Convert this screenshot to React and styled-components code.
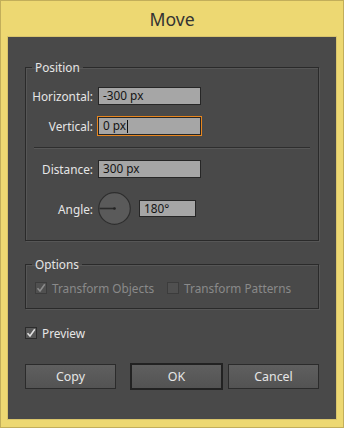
import React from 'react';
import styled, { createGlobalStyle } from 'styled-components';

const GlobalStyle = createGlobalStyle`
    html, body {
        margin: 0;
        padding: 0;
        background: #edd872;
    }
    * {
        box-sizing: border-box;
    }
`;

const font = `"Noto Sans", "Open Sans", sans-serif`;

const Frame = styled.div`
    width: 344px;
    height: 428px;
    display: flex;
    flex-direction: column;
    background: #edd872;
    border: 1px solid #c2ae5a;
    font-family: ${font};
    font-size: 11.8px;
`;

const TitleBar = styled.div`
    height: 36px;
    display: flex;
    align-items: center;
    justify-content: center;
    color: #333;
    font-size: 17.6px;
    padding-bottom: 1px;
`;

const Panel = styled.div`
    flex: 1;
    margin: 0 7px 8px;
    background: #494949;
    box-shadow: 0 0 0 1px #d8c46c;
    padding: 22px 17px 0;
    display: flex;
    flex-direction: column;
`;

const Group = styled.fieldset`
    margin: ${(p) => p.$top || 0}px 0 0;
    padding: 0 0 ${(p) => p.$bottom || 0}px;
    border: 1px solid #2a2a2a;
    box-shadow: inset 1px 1px 0 #565656, 1px 1px 0 #565656;
    min-width: 0;
`;

const Legend = styled.legend`
    margin-left: 6px;
    padding: 0 3px;
    color: #e6e6e6;
    line-height: 16px;
`;

const Row = styled.div`
    display: flex;
    align-items: center;
    margin-top: ${(p) => p.$top}px;
    height: ${(p) => p.$height || 18}px;
`;

const Label = styled.div`
    width: 67px;
    text-align: right;
    color: #e6e6e6;
    margin-right: 5px;
    white-space: nowrap;
`;

const Field = styled.div`
    width: ${(p) => p.$width || 103}px;
    height: ${(p) => p.$height || 18}px;
    background: #a6a6a6;
    border: 1px solid #262626;
    color: #141414;
    padding-left: 4px;
    display: flex;
    align-items: center;
    line-height: 1;
    outline: ${(p) => (p.$focus ? '1px solid #e8861e' : 'none')};
    margin-left: ${(p) => p.$gap || 0}px;
`;

const Caret = styled.span`
    display: inline-block;
    width: 1px;
    height: 13px;
    background: #111;
    margin-left: 1px;
`;

const Separator = styled.div`
    margin: 12px 8px 0;
    border-top: 1px solid #2e2e2e;
    border-bottom: 1px solid #575757;
`;

const CheckRow = styled.div`
    display: flex;
    align-items: center;
    height: 12px;
    margin-top: ${(p) => p.$top}px;
    padding-left: ${(p) => p.$left || 0}px;
`;

const Check = styled.label`
    display: flex;
    align-items: center;
    gap: 5px;
    margin-right: 13px;
    color: ${(p) => (p.$disabled ? '#8a8a8a' : '#e6e6e6')};
    white-space: nowrap;
`;

const Box = styled.span`
    width: 12px;
    height: 12px;
    border: 1px solid ${(p) => (p.$disabled ? '#3c3c3c' : '#2c2c2c')};
    background: ${(p) => (p.$disabled ? '#505050' : '#575757')};
    display: flex;
    align-items: center;
    justify-content: center;
`;

const Buttons = styled.div`
    display: flex;
    align-items: center;
    justify-content: space-between;
    margin-top: 24px;
    height: 27px;
`;

const Pair = styled.div`
    display: flex;
    align-items: center;
    gap: 5px;
`;

const Button = styled.div`
    width: ${(p) => (p.$default ? 93 : 91)}px;
    height: ${(p) => (p.$default ? 27 : 25)}px;
    border: ${(p) => (p.$default ? '2px solid #222' : '1px solid #2b2b2b')};
    background: linear-gradient(#5f5f5f, #535353);
    color: #e6e6e6;
    display: flex;
    align-items: center;
    justify-content: center;
    font-size: 12.4px;
`;

const CheckMark = ({ color }) => (
    <svg width="10" height="10" viewBox="0 0 10 10">
        <path d="M1.5 5.2 L4 8 L8.8 1.2" fill="none" stroke={color} strokeWidth="1.6" />
    </svg>
);

const Dial = () => (
    <svg width="33" height="33" viewBox="0 0 33 33">
        <circle cx="16.5" cy="16.5" r="15.8" fill="#5a5a5a" stroke="#2e2e2e" strokeWidth="1.2" />
        <line x1="1.5" y1="16.5" x2="16.5" y2="16.5" stroke="#2a2a2a" strokeWidth="1.6" />
        <circle cx="16.5" cy="16.5" r="1.3" fill="#222" />
    </svg>
);

const App = () => (
    <>
        <GlobalStyle />
        <Frame>
            <TitleBar>Move</TitleBar>
            <Panel>
                <Group $bottom={15}>
                    <Legend>Position</Legend>
                    <Row $top={12}>
                        <Label>Horizontal:</Label>
                        <Field>-300 px</Field>
                    </Row>
                    <Row $top={12}>
                        <Label>Vertical:</Label>
                        <Field $focus>0 px<Caret /></Field>
                    </Row>
                    <Separator />
                    <Row $top={11}>
                        <Label>Distance:</Label>
                        <Field>300 px</Field>
                    </Row>
                    <Row $top={14} $height={33}>
                        <Label>Angle:</Label>
                        <Dial />
                        <Field $width={57} $height={17} $gap={8}>180°</Field>
                    </Row>
                </Group>
                <Group $top={15} $bottom={14}>
                    <Legend>Options</Legend>
                    <CheckRow $top={10} $left={9}>
                        <Check $disabled>
                            <Box $disabled><CheckMark color="#8c8c8c" /></Box>
                            Transform Objects
                        </Check>
                        <Check $disabled>
                            <Box $disabled />
                            Transform Patterns
                        </Check>
                    </CheckRow>
                </Group>
                <CheckRow $top={18}>
                    <Check>
                        <Box><CheckMark color="#e0e0e0" /></Box>
                        Preview
                    </Check>
                </CheckRow>
                <Buttons>
                    <Button>Copy</Button>
                    <Pair>
                        <Button $default>OK</Button>
                        <Button>Cancel</Button>
                    </Pair>
                </Buttons>
            </Panel>
        </Frame>
    </>
);

export default App;
